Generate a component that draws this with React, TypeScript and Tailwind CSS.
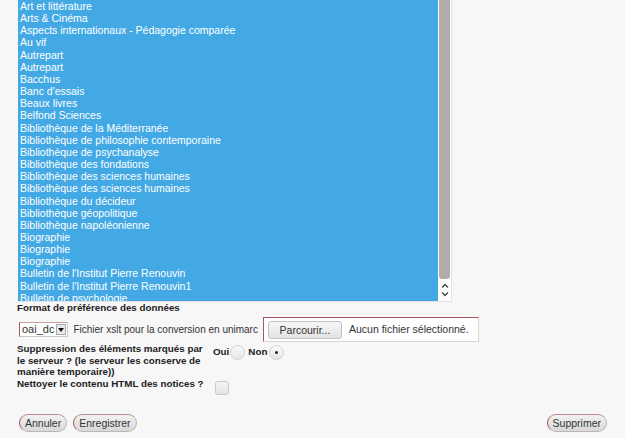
import React from 'react';

const revues = [
    'Art et littérature',
    'Arts & Cinéma',
    'Aspects internationaux - Pédagogie comparée',
    'Au vif',
    'Autrepart',
    'Autrepart',
    'Bacchus',
    "Banc d'essais",
    'Beaux livres',
    'Belfond Sciences',
    'Bibliothèque de la Méditerranée',
    'Bibliothèque de philosophie contemporaine',
    'Bibliothèque de psychanalyse',
    'Bibliothèque des fondations',
    'Bibliothèque des sciences humaines',
    'Bibliothèque des sciences humaines',
    'Bibliothèque du décideur',
    'Bibliothèque géopolitique',
    'Bibliothèque napoléonienne',
    'Biographie',
    'Biographie',
    'Biographie',
    "Bulletin de l'Institut Pierre Renouvin",
    "Bulletin de l'Institut Pierre Renouvin1",
    'Bulletin de psychologie',
];

const PillButton: React.FC<{ label: string }> = ({ label }) => (
    <button
        type="button"
        className="h-[18px] px-[5px] rounded-full border border-[#bdb6b6] border-l-[#a8585c] border-t-[#b98a8c] bg-gradient-to-b from-[#f2f2f2] to-[#d8d8d8] text-[10.5px] leading-[14px] text-[#333]"
    >
        {label}
    </button>
);

export default function App() {
    return (
        <div className="w-[625px] h-[438px] bg-[#f7f7f7] font-[family-name:'Liberation_Sans',Arial,sans-serif] text-[10px] text-[#222] flex flex-col">
            {/* Liste des revues */}
            <div className="ml-[18px] w-[434px] h-[302px] flex border-r border-b border-[#e2e2e2]">
                <div className="w-[420px] bg-[#43a9e5] overflow-hidden pl-[2px] text-[10.5px]">
                    {revues.map((r, i) => (
                        <div key={i} className="h-[12.17px] leading-[12px] text-white whitespace-nowrap">
                            {r}
                        </div>
                    ))}
                </div>
                <div className="w-[13px] bg-white flex flex-col">
                    <div className="mx-[1px] w-[11px] h-[279px] bg-[#b3aba8] rounded-b-[3px]" />
                    <div className="flex-1 flex flex-col items-center justify-center gap-[4px] text-[#444]">
                        <svg width="8" height="5" viewBox="0 0 8 5"><path d="M1 4.5 L4 1.5 L7 4.5" fill="none" stroke="currentColor" strokeWidth="1.4" /></svg>
                        <svg width="8" height="5" viewBox="0 0 8 5"><path d="M1 0.5 L4 3.5 L7 0.5" fill="none" stroke="currentColor" strokeWidth="1.4" /></svg>
                    </div>
                </div>
            </div>

            <div className="pl-[17px] font-bold text-[9.8px] leading-[12px]">Format de préférence des données</div>

            {/* Format + fichier xslt */}
            <div className="flex items-center mt-[3px] ml-[19px] h-[25px]">
                <div className="flex items-center h-[15px] border border-[#c9c9c9] border-l-[#a8585c] border-t-[#c9a0a2] bg-white">
                    <span className="px-[2px] text-[11px] leading-[13px] text-[#333]">oai_dc</span>
                    <span className="w-[10px] h-[11px] mr-[1px] bg-[#e9e9e9] border border-[#aaa] flex items-center justify-center">
                        <svg width="6" height="4" viewBox="0 0 6 4"><path d="M0 0 H6 L3 4 Z" fill="#111" /></svg>
                    </span>
                </div>
                <span className="ml-[5px] text-[#333]">Fichier xslt pour la conversion en unimarc</span>
                <div className="ml-[5px] w-[216px] h-[25px] flex items-center bg-white border border-[#d6d6d6] border-t-[#a8585c] border-l-[#a8585c]">
                    <span className="ml-[4px] h-[18px] w-[74px] text-center rounded-[3px] border border-[#c2c2c2] bg-gradient-to-b from-[#f7f7f7] to-[#e3e3e3] text-[10.5px] leading-[16px] text-[#333]">Parcourir...</span>
                    <span className="ml-[7px] text-[10.5px] text-[#333]">Aucun fichier sélectionné.</span>
                </div>
            </div>

            {/* Suppression */}
            <div className="flex mt-[1px] pl-[17px]">
                <div className="w-[192px] font-bold text-[9.8px] leading-[11.7px] whitespace-nowrap">
                    Suppression des éléments marqués par
                    <br />
                    le serveur ? (le serveur les conserve de
                    <br />
                    manière temporaire))
                </div>
                <div className="ml-[4px] mt-[1px] flex items-center h-[16px] font-bold text-[9.8px]">
                    <span>Oui</span>
                    <span className="ml-[1px] w-[15px] h-[15px] rounded-full border border-[#d2d2d2] bg-gradient-to-b from-[#fafafa] to-[#e5e5e5]" />
                    <span className="ml-[3px]">Non</span>
                    <span className="ml-[2px] w-[15px] h-[15px] rounded-full border border-[#d2d2d2] bg-gradient-to-b from-[#fafafa] to-[#e5e5e5] flex items-center justify-center">
                        <span className="w-[3px] h-[3px] rounded-full bg-[#222]" />
                    </span>
                </div>
            </div>

            {/* Nettoyer */}
            <div className="flex pl-[17px]">
                <div className="w-[198px] font-bold text-[9.8px] leading-[12px]">Nettoyer le contenu HTML des notices ?</div>
                <span className="mt-[3px] w-[14px] h-[14px] rounded-[3px] border border-[#c9c9c9] bg-gradient-to-b from-[#f5f5f5] to-[#e3e3e3]" />
            </div>

            {/* Boutons */}
            <div className="mt-auto mb-[6px] flex items-center pl-[19px] pr-[18px]">
                <PillButton label="Annuler" />
                <span className="w-[6px]" />
                <PillButton label="Enregistrer" />
                <span className="flex-1" />
                <PillButton label="Supprimer" />
            </div>
        </div>
    );
}
